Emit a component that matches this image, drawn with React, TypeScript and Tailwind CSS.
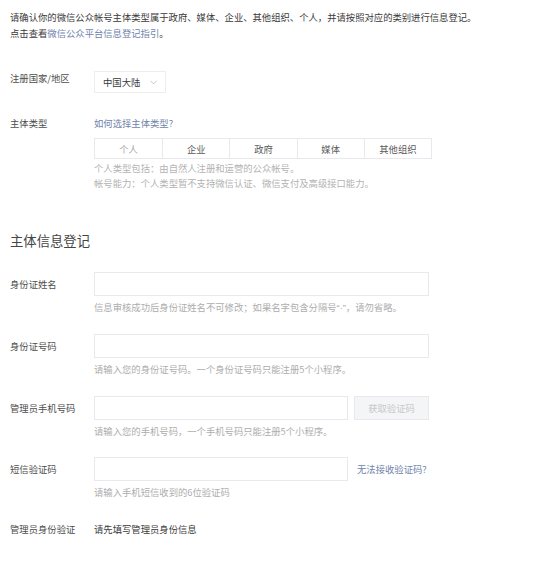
import React from "react";

const FONT = { fontFamily: '"Noto Sans CJK SC", "Noto Sans", sans-serif' };

function Chevron() {
  return (
    <svg width="7" height="5" viewBox="0 0 7 5" className="ml-auto mr-[8px]">
      <path d="M0.5 0.8 L3.5 3.8 L6.5 0.8" fill="none" stroke="#b8b8b8" strokeWidth="0.8" />
    </svg>
  );
}

function FieldRow({
  label,
  mt,
  children,
  hint,
}: {
  label: string;
  mt: string;
  children: React.ReactNode;
  hint?: React.ReactNode;
}) {
  return (
    <div className={`flex ${mt}`}>
      <div className="w-[84px] shrink-0 leading-[24px] text-[#4d4d4d]">{label}</div>
      <div className="flex flex-col">
        <div className="flex items-center">{children}</div>
        {hint && <div className="mt-[3px] leading-[16px] text-[#adadad]">{hint}</div>}
      </div>
    </div>
  );
}

export default function App() {
  const tabs = ["个人", "企业", "政府", "媒体", "其他组织"];
  return (
    <div className="w-[542px] h-[565px] bg-white overflow-hidden" style={FONT}>
      <div className="px-[10px] pt-[9px] text-[9.33px]">
        <div className="leading-[16px] text-[#3a3a3a]">
          <div>请确认你的微信公众帐号主体类型属于政府、媒体、企业、其他组织、个人，并请按照对应的类别进行信息登记。</div>
          <div>
            点击查看<span className="text-[#7184aa]">微信公众平台信息登记指引</span>。
          </div>
        </div>

        <div className="flex mt-[29px]">
          <div className="w-[84px] shrink-0 leading-[16px] text-[#4d4d4d]">注册国家/地区</div>
          <div className="mt-[1px] w-[72px] h-[22px] border border-[#ededf0] flex items-center pl-[8px] text-[#3a3a3a]">
            <span>中国大陆</span>
            <Chevron />
          </div>
        </div>

        <div className="flex mt-[22px]">
          <div className="w-[84px] shrink-0 leading-[16px] text-[#4d4d4d]">主体类型</div>
          <div className="flex flex-col">
            <div className="leading-[16px] text-[#7184aa]">如何选择主体类型?</div>
            <div className="mt-[7px] w-[338px] h-[21px] border border-[#e9e9ed] grid grid-cols-5">
              {tabs.map((t, i) => (
                <div
                  key={t}
                  className={`flex items-center justify-center ${i > 0 ? "border-l border-[#e9e9ed]" : ""} ${
                    i === 0 ? "text-[#a8a8a8]" : "text-[#5a5a5a]"
                  }`}
                >
                  {t}
                </div>
              ))}
            </div>
            <div className="mt-[2px] leading-[15px] text-[#b3b3b3]">
              <div>个人类型包括：由自然人注册和运营的公众帐号。</div>
              <div>帐号能力：个人类型暂不支持微信认证、微信支付及高级接口能力。</div>
            </div>
          </div>
        </div>

        <div className="mt-[40px] text-[13.33px] leading-[20px] text-[#444]">主体信息登记</div>

        <FieldRow
          label="身份证姓名"
          mt="mt-[21px]"
          hint={
            <>
              信息审核成功后身份证姓名不可修改；如果名字包含分隔号
              <span style={{ fontFamily: '"Liberation Sans", sans-serif' }}>“·”</span>，请勿省略。
            </>
          }
        >
          <div className="w-[335px] h-[24px] border border-[#e9e9ed]" />
        </FieldRow>

        <FieldRow label="身份证号码" mt="mt-[18px]" hint="请输入您的身份证号码。一个身份证号码只能注册5个小程序。">
          <div className="w-[335px] h-[24px] border border-[#e9e9ed]" />
        </FieldRow>

        <FieldRow label="管理员手机号码" mt="mt-[19px]" hint="请输入您的手机号码，一个手机号码只能注册5个小程序。">
          <div className="w-[254px] h-[24px] border border-[#e9e9ed]" />
          <div className="ml-[6px] w-[75px] h-[24px] border border-[#e9e9ed] bg-[#f4f5f7] flex items-center justify-center text-[#c8c8c8]">
            获取验证码
          </div>
        </FieldRow>

        <FieldRow label="短信验证码" mt="mt-[18px]" hint="请输入手机短信收到的6位验证码">
          <div className="w-[254px] h-[24px] border border-[#e9e9ed]" />
          <div className="ml-[9px] text-[#7184aa]">无法接收验证码?</div>
        </FieldRow>

        <div className="flex mt-[21px]">
          <div className="w-[84px] shrink-0 leading-[16px] text-[#4d4d4d]">管理员身份验证</div>
          <div className="leading-[16px] text-[#3a3a3a]">请先填写管理员身份信息</div>
        </div>
      </div>
    </div>
  );
}
